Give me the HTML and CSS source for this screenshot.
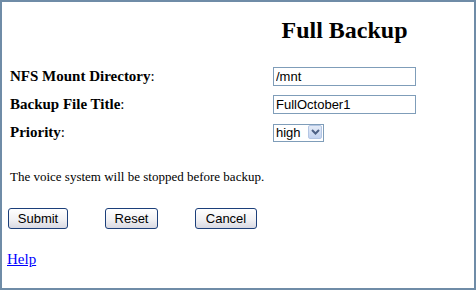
FILE: index.html
```html
<!DOCTYPE html>
<html lang="en">
<head>
    <meta charset="UTF-8">
    <title>Full Backup</title>
    <link rel="stylesheet" href="styles.css">
</head>
<body>
    <div class="frame">
        <form class="backup-form">
            <div class="form-grid">
                <div></div>
                <h1 class="page-title">Full Backup</h1>

                <label class="field-label" for="nfs-dir"><b>NFS Mount Directory</b>:</label>
                <input class="text-field" id="nfs-dir" type="text" value="/mnt">

                <label class="field-label" for="file-title"><b>Backup File Title</b>:</label>
                <input class="text-field" id="file-title" type="text" value="FullOctober1">

                <label class="field-label" for="priority"><b>Priority</b>:</label>
                <div class="select-wrap">
                    <select class="select-field" id="priority">
                        <option>high</option>
                        <option>normal</option>
                        <option>low</option>
                    </select>
                    <span class="select-arrow">
                        <svg width="9" height="6" viewBox="0 0 9 6"><path d="M1 1 L4.5 4.5 L8 1" fill="none" stroke="#4d6185" stroke-width="2"/></svg>
                    </span>
                </div>
            </div>

            <p class="notice">The voice system will be stopped before backup.</p>

            <div class="button-row">
                <button type="button" class="btn btn-submit">Submit</button>
                <button type="reset" class="btn btn-reset">Reset</button>
                <button type="button" class="btn btn-cancel">Cancel</button>
            </div>

            <a class="help-link" href="#">Help</a>
        </form>
    </div>
</body>
</html>
```

FILE: styles.css
```css
html, body {
    margin: 0;
    padding: 0;
    background: #fff;
}

.frame {
    box-sizing: border-box;
    width: 476px;
    height: 290px;
    border: 2px solid #6f8ca7;
    font-family: "Liberation Serif", "Times New Roman", serif;
    color: #000;
}

.backup-form {
    padding: 0 0 0 5px;
}

.form-grid {
    display: grid;
    grid-template-columns: 266px 143px;
    align-items: center;
    row-gap: 9px;
}

.page-title {
    margin: 14px 0 14px 0;
    font-size: 24px;
    font-weight: bold;
    text-align: center;
    line-height: 28px;
}

.field-label {
    padding-left: 3px;
    font-size: 15px;
}

.text-field {
    box-sizing: border-box;
    width: 143px;
    height: 19px;
    margin: 0;
    padding: 1px 2px;
    border: 1px solid #7f9db9;
    font-family: "Liberation Sans", Arial, sans-serif;
    font-size: 13px;
    color: #000;
    outline: none;
}

.select-wrap {
    position: relative;
    width: 51px;
    height: 18px;
}

.select-field {
    appearance: none;
    -webkit-appearance: none;
    box-sizing: border-box;
    width: 51px;
    height: 18px;
    margin: 0;
    padding: 0 0 0 2px;
    border: 1px solid #7f9db9;
    border-radius: 0;
    background: #fff;
    font-family: "Liberation Sans", Arial, sans-serif;
    font-size: 13px;
    color: #000;
}

.select-arrow {
    position: absolute;
    top: 2px;
    right: 2px;
    width: 14px;
    height: 14px;
    box-sizing: border-box;
    border: 1px solid #b4c6e4;
    border-radius: 2px;
    background: linear-gradient(#e4ebf7, #c3d3f0);
    display: flex;
    align-items: center;
    justify-content: center;
    pointer-events: none;
}

.notice {
    margin: 28px 0 0 3px;
    font-size: 13px;
}

.button-row {
    display: flex;
    margin-top: 23px;
    margin-left: 1px;
}

.btn {
    box-sizing: border-box;
    height: 21px;
    padding: 0;
    border: 1px solid #1c3f7a;
    border-radius: 3px;
    background: linear-gradient(#ffffff 0%, #f1f1f4 55%, #d9d9e2 100%);
    font-family: "Liberation Sans", Arial, sans-serif;
    font-size: 13px;
    color: #000;
}

.btn-submit {
    width: 60px;
}

.btn-reset {
    width: 53px;
    margin-left: 37px;
}

.btn-cancel {
    width: 62px;
    margin-left: 37px;
}

.help-link {
    display: inline-block;
    margin-top: 22px;
    margin-left: 0;
    font-size: 15px;
    color: #0000ff;
}
```
